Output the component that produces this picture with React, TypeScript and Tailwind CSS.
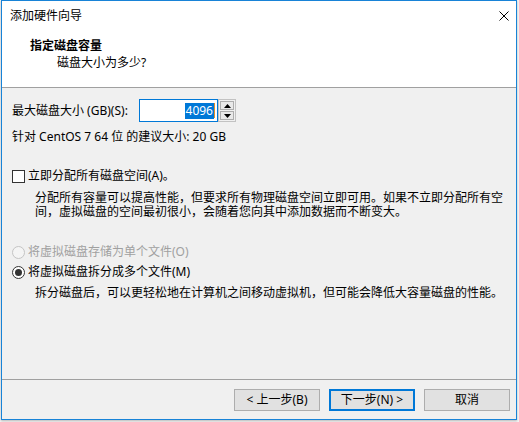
function Radio({ checked, disabled }: { checked?: boolean; disabled?: boolean }) {
  return (
    <span
      className={`w-[13px] h-[13px] rounded-full border flex items-center justify-center shrink-0 ${
        disabled ? "border-[#c4c4c4] bg-[#f4f4f4]" : "border-[#333333] bg-white"
      }`}
    >
      {checked && <span className="w-[7px] h-[7px] rounded-full bg-[#333333]" />}
    </span>
  );
}

function Button({ label, primary }: { label: string; primary?: boolean }) {
  return (
    <div
      className={`w-[86px] h-[22px] bg-[#e1e1e1] flex items-center justify-center ${
        primary ? "border-2 border-[#0078d7]" : "border border-[#adadad]"
      }`}
    >
      {label}
    </div>
  );
}

export default function App() {
  return (
    <div className="w-[519px] h-[422px] bg-[#f4f4f4] overflow-hidden font-['Noto_Sans','Noto_Sans_CJK_SC',sans-serif] text-[12px] text-black">
      <div className="ml-px w-[516px] h-[420px] border border-[#1883d7] bg-[#f0f0f0] flex flex-col shadow-[0_1px_2px_rgba(0,0,0,0.25)]">
        {/* title bar + header */}
        <div className="h-[87px] bg-white border-b border-[#a0a0a0] flex flex-col shrink-0">
          <div className="h-[29px] flex items-center justify-between pl-[8px] pr-[7px] leading-[16px]">
            <span>添加硬件向导</span>
            <svg width="10" height="10" viewBox="0 0 10 10" className="block">
              <path d="M0.5 0.5 L9.5 9.5 M9.5 0.5 L0.5 9.5" stroke="#000" strokeWidth="1" fill="none" />
            </svg>
          </div>
          <div className="mt-[8px] pl-[28px] leading-[16px] font-bold">指定磁盘容量</div>
          <div className="mt-px pl-[55px] leading-[16px]">磁盘大小为多少?</div>
        </div>

        {/* body */}
        <div className="flex-1 flex flex-col pl-[10px] leading-[16px]">
          <div className="mt-[11px] h-[23px] flex items-center">
            <span className="w-[127px] shrink-0">最大磁盘大小 (GB)(S):</span>
            <div className="w-[79px] h-[23px] border border-[#0078d7] bg-white flex items-center justify-end pr-[2px]">
              <span className="bg-[#0078d7] text-white px-px leading-[16px]">4096</span>
              <span className="w-px h-[15px] bg-[#e0902a]" />
            </div>
            <div className="w-[18px] h-[23px] border border-[#c2c2c2] flex flex-col p-px gap-px">
              <div className="flex-1 border border-[#adadad] bg-[#e9e9e9] flex items-center justify-center">
                <svg width="7" height="4" viewBox="0 0 7 4" className="block">
                  <path d="M3.5 0 L7 4 L0 4 Z" fill="#000" />
                </svg>
              </div>
              <div className="flex-1 border border-[#adadad] bg-[#e9e9e9] flex items-center justify-center">
                <svg width="7" height="4" viewBox="0 0 7 4" className="block">
                  <path d="M0 0 L7 0 L3.5 4 Z" fill="#000" />
                </svg>
              </div>
            </div>
          </div>

          <div className="mt-[7px]">针对 CentOS 7 64 位 的建议大小: 20 GB</div>

          <div className="mt-[23px] h-[16px] flex items-center gap-[3px]">
            <span className="w-[13px] h-[13px] border border-[#333333] bg-white shrink-0" />
            <span>立即分配所有磁盘空间(A)。</span>
          </div>
          <div className="mt-[7px] pl-[23px] leading-[14px] w-[495px]">
            分配所有容量可以提高性能，但要求所有物理磁盘空间立即可用。如果不立即分配所有空间，虚拟磁盘的空间最初很小，会随着您向其中添加数据而不断变大。
          </div>

          <div className="mt-[25px] h-[16px] flex items-center gap-[3px] text-[#a0a0a0]">
            <Radio disabled />
            <span>将虚拟磁盘存储为单个文件(O)</span>
          </div>
          <div className="mt-[4px] h-[16px] flex items-center gap-[3px]">
            <Radio checked />
            <span>将虚拟磁盘拆分成多个文件(M)</span>
          </div>
          <div className="mt-[6px] pl-[23px] leading-[14px]">
            拆分磁盘后，可以更轻松地在计算机之间移动虚拟机，但可能会降低大容量磁盘的性能。
          </div>
        </div>

        {/* footer */}
        <div className="h-[40px] shrink-0 border-t border-[#a0a0a0] flex justify-end items-start gap-[9px] pt-[9px] pr-[6px] leading-[16px]">
          <Button label="< 上一步(B)" />
          <Button label="下一步(N) >" primary />
          <Button label="取消" />
        </div>
      </div>
    </div>
  );
}
